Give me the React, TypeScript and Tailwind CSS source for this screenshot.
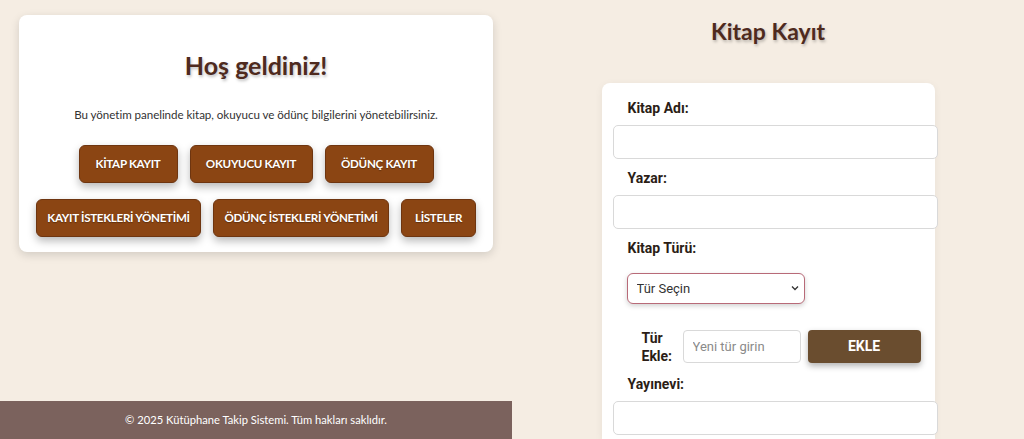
import React from 'react'

const navTop = [
  { label: 'KİTAP KAYIT', w: 'w-[99px]' },
  { label: 'OKUYUCU KAYIT', w: 'w-[123px]' },
  { label: 'ÖDÜNÇ KAYIT', w: 'w-[109px]' },
]
const navBottom = [
  { label: 'KAYIT İSTEKLERİ YÖNETİMİ', w: 'w-[165px]' },
  { label: 'ÖDÜNÇ İSTEKLERİ YÖNETİMİ', w: 'w-[176px]' },
  { label: 'LİSTELER', w: 'w-[75px]' },
]

function NavButton({ label, w }: { label: string; w: string }) {
  return (
    <button
      type="button"
      className={`${w} h-[38px] whitespace-nowrap rounded-[6px] bg-[#8b4513] border border-[#6e3510] text-white text-[11.6px] font-bold tracking-[-0.3px] shadow-[0_4px_8px_rgba(0,0,0,0.28)] [text-shadow:0_1px_1px_rgba(0,0,0,0.3)]`}
    >
      {label}
    </button>
  )
}

function TextInput() {
  return (
    <input
      type="text"
      className="block w-[325px] h-[34px] rounded-[5px] border border-[#d9d9d9] bg-white px-3 text-[14px] focus:outline-none"
    />
  )
}

function Label({ children, className = '' }: { children: React.ReactNode; className?: string }) {
  return (
    <label className={`block ml-[15px] text-[14px] leading-[20px] font-bold text-[#2b1d16] ${className}`}>
      {children}
    </label>
  )
}

export default function App() {
  return (
    <div className="flex h-[439px] w-full overflow-hidden bg-[#f5ede3] font-['Lato',sans-serif]">
      {/* Left: welcome panel + footer */}
      <div className="flex w-[512px] flex-col">
        <div className="ml-[19px] mt-[15px] w-[474px] rounded-[8px] bg-white pt-[32px] pb-[15px] shadow-[0_3px_10px_rgba(0,0,0,0.14)]">
          <h1 className="text-center text-[25px] leading-[36px] font-bold text-[#4e2a1e] [text-shadow:1px_2px_3px_rgba(0,0,0,0.25)]">
            Hoş geldiniz!
          </h1>
          <p className="mt-[22px] text-center text-[11.6px] tracking-[-0.05px] leading-[20px] text-[#333]">
            Bu yönetim panelinde kitap, okuyucu ve ödünç bilgilerini yönetebilirsiniz.
          </p>
          <div className="mt-[20px] flex justify-center gap-[12px]">
            {navTop.map((b) => (
              <NavButton key={b.label} {...b} />
            ))}
          </div>
          <div className="mt-[16px] flex justify-center gap-[12px]">
            {navBottom.map((b) => (
              <NavButton key={b.label} {...b} />
            ))}
          </div>
        </div>

        <footer className="mt-auto flex h-[38px] items-center justify-center bg-[#7b625d] text-[11.2px] text-white">
          © 2025 Kütüphane Takip Sistemi. Tüm hakları saklıdır.
        </footer>
      </div>

      {/* Right: book registration form */}
      <div className="flex flex-1 flex-col items-center">
        <h2 className="mt-[14px] text-[23px] leading-[34px] font-bold text-[#4e2a1e] [text-shadow:1px_2px_3px_rgba(0,0,0,0.25)]">
          Kitap Kayıt
        </h2>

        <div className="mt-[35px] w-[333px] flex-1 rounded-t-[8px] bg-white px-[11px] pt-[15px] font-['Roboto',sans-serif] shadow-[0_2px_8px_rgba(0,0,0,0.06)]">
          <Label>Kitap Adı:</Label>
          <div className="mt-[7px]">
            <TextInput />
          </div>

          <Label className="mt-[9px]">Yazar:</Label>
          <div className="mt-[7px]">
            <TextInput />
          </div>

          <Label className="mt-[9px]">Kitap Türü:</Label>
          <div className="mt-[15px] ml-[14px] relative w-[178px]">
            <select className="h-[31px] w-[178px] appearance-none rounded-[6px] border border-[#b86a78] bg-white pl-[9px] text-[13px] text-[#333] shadow-[0_2px_5px_rgba(0,0,0,0.18)] focus:outline-none">
              <option>Tür Seçin</option>
            </select>
            <svg
              className="pointer-events-none absolute right-[6px] top-[12px]"
              width="8"
              height="6"
              viewBox="0 0 8 6"
              fill="none"
            >
              <path d="M1 1.5 L4 4.5 L7 1.5" stroke="#333" strokeWidth="1.3" />
            </svg>
          </div>

          <div className="mt-[26px] flex h-[33px] items-center">
            <span className="ml-[29px] w-[41px] text-[14px] leading-[18px] font-bold text-[#2b1d16]">
              Tür Ekle:
            </span>
            <input
              type="text"
              placeholder="Yeni tür girin"
              className="h-[33px] w-[118px] rounded-[4px] border border-[#d9d9d9] bg-white px-[9px] text-[13px] placeholder:text-[#8a8a8a] focus:outline-none"
            />
            <button
              type="button"
              className="ml-[7px] h-[33px] w-[113px] rounded-[4px] bg-[#6a4d2f] text-[14px] font-bold text-white shadow-[0_3px_6px_rgba(0,0,0,0.3)]"
            >
              EKLE
            </button>
          </div>

          <Label className="mt-[11px]">Yayınevi:</Label>
          <div className="mt-[7px]">
            <TextInput />
          </div>
        </div>
      </div>
    </div>
  )
}
